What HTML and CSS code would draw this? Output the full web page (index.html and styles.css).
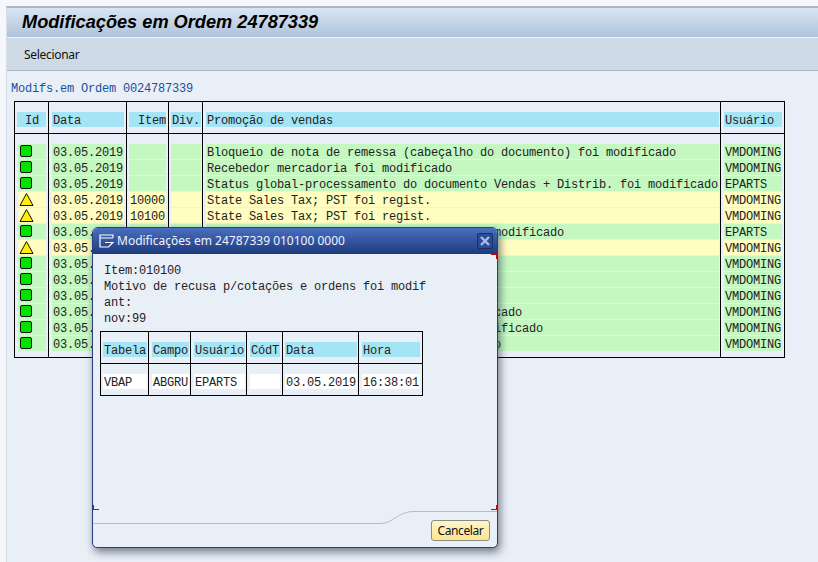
FILE: index.html
```html
<!DOCTYPE html>
<html lang="pt">
<head>
  <meta charset="UTF-8" />
  <meta name="viewport" content="width=device-width, initial-scale=1.0" />
  <title>Modificações em Ordem 24787339</title>
  <link rel="stylesheet" href="styles.css">
</head>
<body>
  <svg class="defs" width="0" height="0">
    <symbol id="ico-ok" viewBox="0 0 15 15">
      <rect x="1.5" y="1.5" width="11" height="11" rx="1.5" fill="#00e100" stroke="#111" />
    </symbol>
    <symbol id="ico-warn" viewBox="0 0 15 15">
      <path d="M7.5 1.5 L14 13.5 H1 Z" fill="#ffee00" stroke="#111" stroke-linejoin="round" />
    </symbol>
  </svg>

  <div class="window">
    <div class="titlebar"><h1>Modificações em Ordem 24787339</h1></div>
    <div class="toolbar">Selecionar</div>
    <div class="content">
      <div class="heading">Modifs.em Ordem 0024787339</div>
      <table class="list main">
        <thead>
          <tr>
            <th><div class="mid">Id</div></th>
            <th><div>Data</div></th>
            <th><div class="num">Item</div></th>
            <th><div>Div.</div></th>
            <th><div>Promoção de vendas</div></th>
            <th><div>Usuário</div></th>
          </tr>
        </thead>
        <tbody>
          <tr class="ok"><td><div><svg class="ico"><use href="#ico-ok"/></svg></div></td><td><div>03.05.2019</div></td><td><div></div></td><td><div></div></td><td><div>Bloqueio de nota de remessa (cabeçalho do documento) foi modificado</div></td><td><div>VMDOMING</div></td></tr>
          <tr class="ok"><td><div><svg class="ico"><use href="#ico-ok"/></svg></div></td><td><div>03.05.2019</div></td><td><div></div></td><td><div></div></td><td><div>Recebedor mercadoria foi modificado</div></td><td><div>VMDOMING</div></td></tr>
          <tr class="ok"><td><div><svg class="ico"><use href="#ico-ok"/></svg></div></td><td><div>03.05.2019</div></td><td><div></div></td><td><div></div></td><td><div>Status global-processamento do documento Vendas + Distrib. foi modificado</div></td><td><div>EPARTS</div></td></tr>
          <tr class="warn"><td><div><svg class="ico"><use href="#ico-warn"/></svg></div></td><td><div>03.05.2019</div></td><td><div>10000</div></td><td><div></div></td><td><div>State Sales Tax; PST foi regist.</div></td><td><div>VMDOMING</div></td></tr>
          <tr class="warn"><td><div><svg class="ico"><use href="#ico-warn"/></svg></div></td><td><div>03.05.2019</div></td><td><div>10100</div></td><td><div></div></td><td><div>State Sales Tax; PST foi regist.</div></td><td><div>VMDOMING</div></td></tr>
          <tr class="ok"><td><div><svg class="ico"><use href="#ico-ok"/></svg></div></td><td><div>03.05.2019</div></td><td><div>10100</div></td><td><div></div></td><td><div>Motivo de recusa p/cotações e ordens foi modificado</div></td><td><div>EPARTS</div></td></tr>
          <tr class="warn"><td><div><svg class="ico"><use href="#ico-warn"/></svg></div></td><td><div>03.05.2019</div></td><td><div></div></td><td><div></div></td><td><div></div></td><td><div>VMDOMING</div></td></tr>
          <tr class="ok"><td><div><svg class="ico"><use href="#ico-ok"/></svg></div></td><td><div>03.05.2019</div></td><td><div></div></td><td><div></div></td><td><div></div></td><td><div>VMDOMING</div></td></tr>
          <tr class="ok"><td><div><svg class="ico"><use href="#ico-ok"/></svg></div></td><td><div>03.05.2019</div></td><td><div></div></td><td><div></div></td><td><div></div></td><td><div>VMDOMING</div></td></tr>
          <tr class="ok"><td><div><svg class="ico"><use href="#ico-ok"/></svg></div></td><td><div>03.05.2019</div></td><td><div></div></td><td><div></div></td><td><div></div></td><td><div>VMDOMING</div></td></tr>
          <tr class="ok"><td><div><svg class="ico"><use href="#ico-ok"/></svg></div></td><td><div>03.05.2019</div></td><td><div></div></td><td><div></div></td><td><div>Preço líquido do item de ordem foi modificado</div></td><td><div>VMDOMING</div></td></tr>
          <tr class="ok"><td><div><svg class="ico"><use href="#ico-ok"/></svg></div></td><td><div>03.05.2019</div></td><td><div></div></td><td><div></div></td><td><div>Condições de expedição da remessa foi modificado</div></td><td><div>VMDOMING</div></td></tr>
          <tr class="ok"><td><div><svg class="ico"><use href="#ico-ok"/></svg></div></td><td><div>03.05.2019</div></td><td><div></div></td><td><div></div></td><td><div>Data de faturamento do item foi modificado</div></td><td><div>VMDOMING</div></td></tr>
        </tbody>
      </table>
    </div>
  </div>

  <div class="dialog">
    <div class="dialog-title">
      <svg class="dialog-icon" viewBox="0 0 15 14" fill="none" stroke="#fff" stroke-width="1.2">
        <path d="M10 8.5 H14 L9.5 13 H1 V1 H14 V3.5 M1 4 H14 M6 8.5 H10" />
      </svg>
      <span class="dialog-name">Modificações em 24787339 010100 0000</span>
      <button class="dialog-close" aria-label="Fechar">
        <svg viewBox="0 0 10 10" width="10" height="10"><path d="M1 1 L9 9 M9 1 L1 9" stroke="#a3bdf2" stroke-width="2.4" /></svg>
      </button>
    </div>
    <div class="dialog-body">
      <p class="dialog-text">Item:010100</p>
      <p class="dialog-text">Motivo de recusa p/cotações e ordens foi modif</p>
      <p class="dialog-text">ant:</p>
      <p class="dialog-text">nov:99</p>
      <table class="list detail">
        <thead>
          <tr>
            <th><div>Tabela</div></th>
            <th><div>Campo</div></th>
            <th><div>Usuário</div></th>
            <th><div>CódT</div></th>
            <th><div>Data</div></th>
            <th><div>Hora</div></th>
          </tr>
        </thead>
        <tbody>
          <tr class="plain">
            <td><div>VBAP</div></td>
            <td><div>ABGRU</div></td>
            <td><div>EPARTS</div></td>
            <td><div></div></td>
            <td><div>03.05.2019</div></td>
            <td><div>16:38:01</div></td>
          </tr>
        </tbody>
      </table>
    </div>
    <div class="dialog-foot">
      <button class="cancel">Cancelar</button>
    </div>

    <span class="mark mark-tr"></span>
    <span class="mark mark-bl"></span>
    <span class="mark mark-br"></span>
    <svg class="foot-line" width="404" height="14" viewBox="0 0 404 14" fill="none">
      <path d="M0 13.5 H288 C299 13.5 306 1.5 320 1.5 H404" stroke="#b3bdcd" />
    </svg>
  </div>
</body>
</html>
```

FILE: styles.css
```css
* {
  box-sizing: border-box;
}
html, body {
  height: 100%;
}
body {
  margin: 0;
  padding: 6px 0 0 6px;
  background: #f5f7fb;
  overflow: hidden;
  font-family: "Liberation Mono", monospace;
  font-size: 12px;
  letter-spacing: -0.2px;
  color: #222;
}
.defs {
  position: absolute;
}

.window {
  height: 100%;
  background: #e9eff7;
  border-top: 2px solid #a9b5c5;
  border-left: 1px solid #d5dde8;
}
.titlebar {
  height: 30px;
  padding: 2px 0 0 15px;
  background: linear-gradient(#dbe5f1, #adc3da);
  border-bottom: 1px solid #eef3f8;
}
.titlebar h1 {
  margin: 0;
  font-family: "Liberation Sans", Arial, sans-serif;
  font-size: 18.2px;
  line-height: 24px;
  font-weight: bold;
  font-style: italic;
  letter-spacing: 0;
  color: #000;
}
.toolbar {
  height: 33px;
  padding: 0 0 0 17px;
  background: #cddae6;
  border-bottom: 1px solid #a9b6c6;
  font-family: "Noto Sans", sans-serif;
  font-size: 12px;
  line-height: 33px;
  letter-spacing: -0.3px;
  color: #111;
}
.content {
  padding: 9px 0 0 7px;
}
.heading {
  margin-left: -3px;
  height: 21px;
  line-height: 18px;
  color: #1a4f9c;
}

.list {
  border-spacing: 0;
  table-layout: fixed;
  border-top: 1px solid #000;
  border-left: 1px solid #000;
}
.list th, .list td {
  padding: 0;
  border-right: 1px solid #000;
  border-bottom: 1px solid #000;
  font-weight: normal;
  text-align: left;
  vertical-align: top;
}
.list th {
  padding-top: 10px;
  padding-bottom: 6px;
}
.list th div, .list td div {
  height: 15px;
  line-height: 18px;
  padding-left: 1px;
  white-space: nowrap;
  overflow: hidden;
}
.list th div {
  background: #a5e4f4;
}
.list .num {
  text-align: right;
}
.list .mid {
  text-align: center;
}
.ok div {
  background: #c4f8c0;
}
.warn div {
  background: #fffdc0;
}
.plain div {
  background: #fff;
}
.ico {
  display: block;
  width: 15px;
  height: 15px;
}

/* main list */
.main {
  width: 771px;
}
.main td {
  border-bottom: 0;
  padding-bottom: 1px;
}
.main tbody tr:first-child td {
  padding-top: 10px;
}
.main tbody tr:last-child td {
  padding-bottom: 6px;
  border-bottom: 1px solid #000;
}
.main th:nth-child(1), .main td:nth-child(1) { width: 34px; padding-left: 3px; padding-right: 2px; }
.main th:nth-child(2), .main td:nth-child(2) { width: 78px; padding-left: 3px; padding-right: 2px; }
.main th:nth-child(3), .main td:nth-child(3) { width: 42px; padding-left: 2px; padding-right: 2px; }
.main th:nth-child(4), .main td:nth-child(4) { width: 34px; padding-left: 2px; padding-right: 1px; }
.main th:nth-child(5), .main td:nth-child(5) { width: 518px; padding-left: 3px; padding-right: 1px; }
.main th:nth-child(6), .main td:nth-child(6) { width: 64px; padding-left: 3px; padding-right: 2px; }
.main th:nth-child(1) {
  padding-left: 2px;
}
.main td:nth-child(1) div {
  padding-left: 0;
}
.main .ico {
  margin-left: 1px;
}

/* detail dialog */
.dialog {
  position: absolute;
  left: 92px;
  top: 227px;
  width: 406px;
  height: 321px;
  display: flex;
  flex-direction: column;
  background: #e9eff7;
  border: 1px solid #26407c;
  border-radius: 6px 6px 5px 5px;
  box-shadow: 2px 4px 9px rgba(30, 40, 60, 0.6);
}
.dialog-title {
  height: 26px;
  flex: none;
  display: flex;
  align-items: center;
  padding: 0 4px 1px 6px;
  background: linear-gradient(#4a6ec0, #1d3a7d);
  border-radius: 5px 5px 0 0;
}
.dialog-icon {
  width: 15px;
  height: 14px;
  margin-right: 3px;
}
.dialog-name {
  flex: 1;
  font-family: "Noto Sans", sans-serif;
  font-size: 12px;
  letter-spacing: 0;
  color: #eef3ff;
}
.dialog-close {
  width: 16px;
  height: 16px;
  padding: 0;
  display: flex;
  align-items: center;
  justify-content: center;
  background: #2c4c90;
  border: 1px solid #1a2f66;
  border-radius: 2px;
}
.dialog-body {
  flex: 1;
  padding: 8px 0 0 7px;
}
.dialog-text {
  margin: 0 0 0 4px;
  height: 16px;
  line-height: 18px;
}
.detail {
  width: 323px;
  margin-top: 5px;
}
.detail th:nth-child(1), .detail td:nth-child(1) { width: 48px; padding-left: 2px; padding-right: 1px; }
.detail th:nth-child(2), .detail td:nth-child(2) { width: 42px; padding-left: 3px; padding-right: 1px; }
.detail th:nth-child(3), .detail td:nth-child(3) { width: 56px; padding-left: 3px; padding-right: 1px; }
.detail th:nth-child(4), .detail td:nth-child(4) { width: 36px; padding-left: 3px; padding-right: 2px; }
.detail th:nth-child(5), .detail td:nth-child(5) { width: 76px; padding-left: 2px; padding-right: 1px; }
.detail th:nth-child(6), .detail td:nth-child(6) { width: 64px; padding-left: 3px; padding-right: 2px; }
.detail td {
  padding-top: 10px;
  padding-bottom: 6px;
}
.dialog-foot {
  display: flex;
  justify-content: flex-end;
  padding: 0 7px 6px 0;
}
.cancel {
  width: 59px;
  height: 21px;
  padding: 0 0 1px;
  font-family: "Noto Sans", sans-serif;
  font-size: 12px;
  letter-spacing: -0.4px;
  color: #111;
  background: linear-gradient(#fff6cf, #fde48e);
  border: 1px solid #8b8b80;
  border-radius: 3px;
}
.mark {
  position: absolute;
  width: 6px;
  height: 5px;
  border-color: #d40000;
  border-style: solid;
  border-width: 0;
}
.mark-tr {
  top: 26px;
  right: 0;
  border-top-width: 1px;
  border-right-width: 1px;
}
.mark-bl {
  top: 277px;
  left: 0;
  border-bottom-width: 1px;
  border-left-width: 1px;
}
.mark-br {
  top: 277px;
  right: 0;
  border-bottom-width: 1px;
  border-right-width: 1px;
}
.foot-line {
  position: absolute;
  left: 0;
  top: 282px;
}
```
